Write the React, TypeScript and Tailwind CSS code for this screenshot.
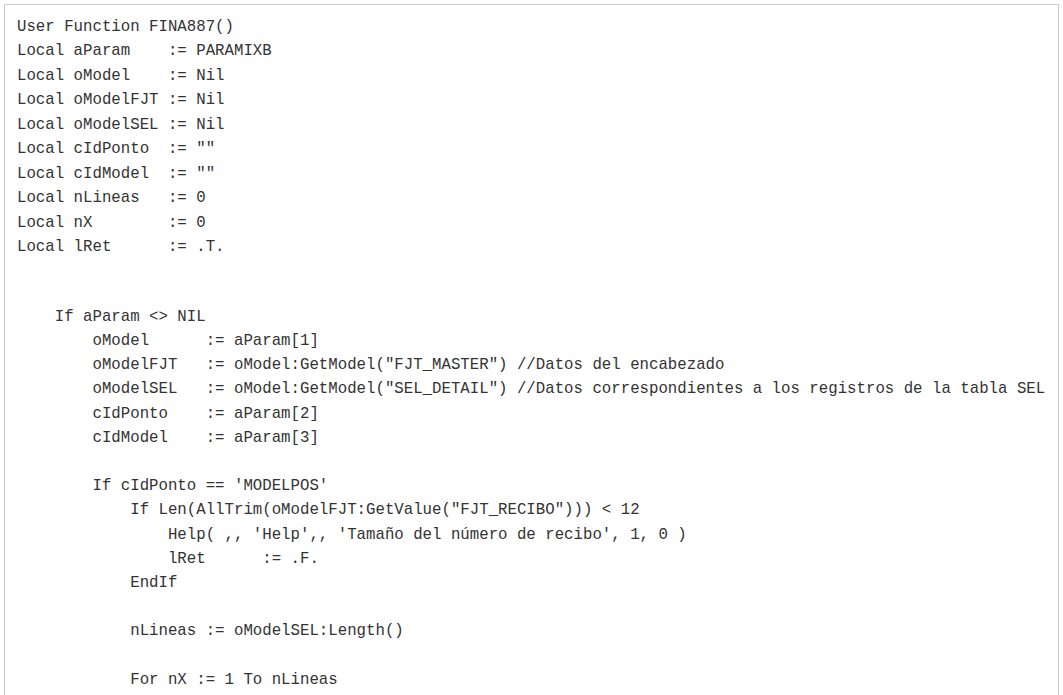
const topLines = [
  'User Function FINA887()',
  'Local aParam    := PARAMIXB',
  'Local oModel    := Nil',
  'Local oModelFJT := Nil',
  'Local oModelSEL := Nil',
  'Local cIdPonto  := ""',
  'Local cIdModel  := ""',
  'Local nLineas   := 0',
  'Local nX        := 0',
  'Local lRet      := .T.',
];

const bodyLines = [
  '    If aParam <> NIL',
  '        oModel      := aParam[1]',
  '        oModelFJT   := oModel:GetModel("FJT_MASTER") //Datos del encabezado',
  '        oModelSEL   := oModel:GetModel("SEL_DETAIL") //Datos correspondientes a los registros de la tabla SEL',
  '        cIdPonto    := aParam[2]',
  '        cIdModel    := aParam[3]',
  '',
  "        If cIdPonto == 'MODELPOS'",
  '            If Len(AllTrim(oModelFJT:GetValue("FJT_RECIBO"))) < 12',
  "                Help( ,, 'Help',, 'Tamaño del número de recibo', 1, 0 )",
  '                lRet      := .F.',
  '            EndIf',
  '',
  '            nLineas := oModelSEL:Length()',
  '',
  '            For nX := 1 To nLineas',
];

export default function App() {
  return (
    <div className="h-screen bg-white overflow-hidden">
      <div className="mx-[4px] mt-[4px] h-[800px] border border-[#c5cad3] bg-white pl-[12px] pt-[10px] text-[15.73px] text-[#333333] font-['Liberation_Mono','Courier_New',monospace]">
        {topLines.map((l, i) => (
          <div key={'t' + i} className="h-[24.45px] leading-[24.45px] whitespace-pre">
            {l}
          </div>
        ))}
        <div className="h-[45.5px]" />
        {bodyLines.map((l, i) => (
          <div key={'b' + i} className="h-[24.2px] leading-[24.2px] whitespace-pre">
            {l || ' '}
          </div>
        ))}
      </div>
    </div>
  );
}
